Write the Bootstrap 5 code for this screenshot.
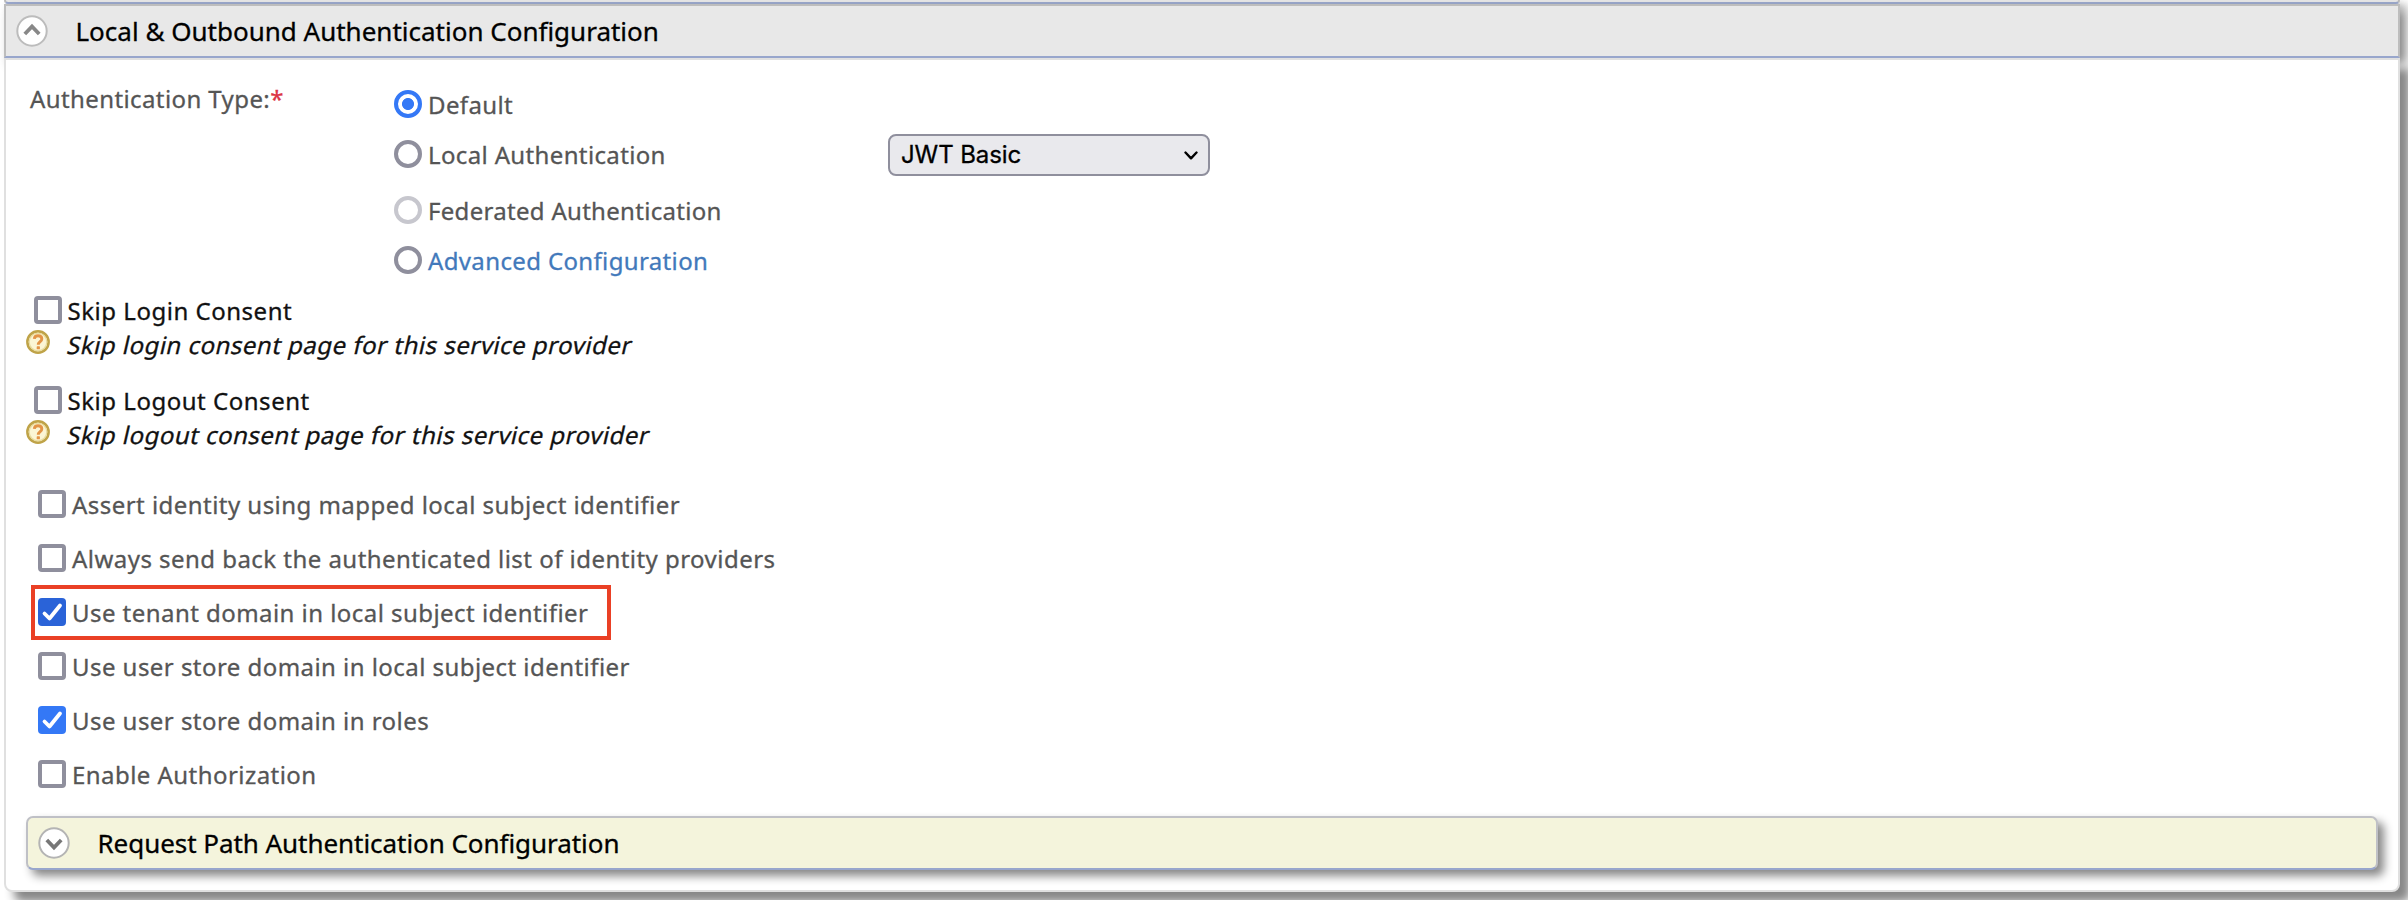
<!DOCTYPE html>
<html lang="en">
<head>
<meta charset="utf-8">
<title>Service Provider Configuration</title>
<link href="https://cdn.jsdelivr.net/npm/bootstrap@5.3.0/dist/css/bootstrap.min.css" rel="stylesheet">
<style>
body{font-family:"Noto Sans","Open Sans",sans-serif;font-size:24px;line-height:32px;color:#555;background:#fff;height:900px;-webkit-text-stroke:.3px}
.prev-panel{height:4px;margin:0 8px 0 4px;background:#e8e8e8;border:2px solid #bbb;border-top:0;border-bottom-color:#98a6cc;border-radius:0 0 5px 5px;box-shadow:6px 6px 10px #888}
.section-bar{height:54px;margin:0 8px 0 4px;padding-left:10px;background:#e8e8e8;border:2px solid #bdbdbd;border-bottom-color:#98a6cc;color:#000;font-size:26px;box-shadow:6px 6px 10px #888;position:relative}
.section-bar svg{margin-right:27.500px}
.section-body{height:834px;margin:0 8px 0 4px;border:2px solid #e0e0e0;border-radius:0 0 8px 8px;background:#fff;box-shadow:10px 10px 10px #888;position:relative}
.sub-bar{height:54px;margin:15px 20px 0 20px;padding-left:10px;background:#f4f4dc;border:2px solid #bfc0c6;border-bottom-color:#98a6cc;border-radius:7px;color:#000;font-size:26px;letter-spacing:-.05px;box-shadow:6px 6px 10px #888}
.sub-bar svg{margin-right:27.500px}
.form-check-input,.form-check-input:focus{flex:none;width:28px;height:28px;margin:0;border:4px solid #8f8f9d;background-color:#fff;box-shadow:none}
.form-check-input[type=checkbox]{border-radius:4px}
.form-check-input[type=checkbox]:checked{border:0;background-color:#3478f6;background-size:28px 28px;background-image:url("data:image/svg+xml,%3Csvg xmlns='http://www.w3.org/2000/svg' viewBox='0 0 28 28'%3E%3Cpath d='M6.5 15.5l5 5L22 7.5' fill='none' stroke='%23fff' stroke-width='3.8' stroke-linecap='round' stroke-linejoin='round'/%3E%3C/svg%3E")}
.form-check-input.hovered[type=checkbox]:checked{background-color:#2a63d8}
.form-check-input[type=radio]:checked{border-color:#3478f6;background-color:#fff;background-image:radial-gradient(circle,#3478f6 5.6px,transparent 6.4px);background-origin:border-box}
.form-check-input:disabled{opacity:1;border-color:#c7c7ce}
.form-check-input:disabled~label{opacity:1}
label,.field-name{padding-top:1.4px;white-space:nowrap;letter-spacing:.45px}
.auth-row{height:234px}
.field-name{width:364px;padding-left:24px;padding-top:22.5px;letter-spacing:.4px}
.radios{padding-top:19px}
.radios label{padding-left:6px;letter-spacing:.36px}
.radio-row{height:50px}
.radio-row.taller{height:56px;padding-top:6px}
.radio-row.taller label{letter-spacing:.3px}
.method-name{width:494px}
.method-select{width:322px;height:42px;margin-top:2px;padding:0 11px;border:2px solid #8f8f9d;border-radius:8px;background:#e9e9ed;color:#000;font:24px/38px Inter,sans-serif;letter-spacing:-.1px;appearance:none;background-image:url("data:image/svg+xml,%3Csvg xmlns='http://www.w3.org/2000/svg' viewBox='0 0 14 9'%3E%3Cpath d='M1.5 1.5L7 7.3l5.500-5.800' fill='none' stroke='%23000' stroke-width='2.400' stroke-linecap='round' stroke-linejoin='round'/%3E%3C/svg%3E");background-repeat:no-repeat;background-position:right 10px center;background-size:14px 9px}
a{color:#4279bb;text-decoration:none}
.consent{height:90px;color:#111}
.consent label{padding-left:5.500px;letter-spacing:.52px}
.consent .top-line{height:32px;padding-left:28px}
.consent .help-line{height:36px;padding-left:20px}
.consent .help-line svg{margin-top:-4px}
.slanted{display:inline-block;transform:skewX(-13deg);transform-origin:0 26px;margin-left:16px;padding-top:2px;letter-spacing:.5px;white-space:nowrap}
.options{padding-top:3px}
.option-row{height:54px;padding-left:32px}
.option-row label{padding-left:6px}
.option-row label.wide-text{letter-spacing:.46px}
.highlight{position:absolute;left:25px;top:111px;width:580px;height:55px;border:4px solid #ea4025;pointer-events:none}
</style>
</head>
<body class="overflow-hidden">
<svg class="d-none">
  <symbol id="help" viewBox="0 0 24 24">
    <circle cx="12" cy="12" r="10.600" fill="#fbf5d5" stroke="#bfa348" stroke-width="2.600"/>
    <circle cx="12" cy="12" r="8.800" fill="none" stroke="#e9dca0" stroke-width="1.200"/>
    <path d="M8.300 8.900C8.500 6.700 10 5.800 12 5.800c2.300 0 3.800 1.200 3.800 3.100 0 2.700-3.500 2.800-3.500 5.800" fill="none" stroke="#e39447" stroke-width="2.900"/>
    <rect x="10.700" y="16.300" width="3.200" height="3" rx=".6" fill="#e39447"/>
  </symbol>
</svg>

<div class="prev-panel"></div>
<div class="section-bar d-flex align-items-center">
  <svg width="32" height="32" viewBox="0 0 32 32"><circle cx="16" cy="16" r="14.700" fill="#fff" stroke="#bcbcbc" stroke-width="2"/><path d="M8.800 19L16 11.500l7.200 7.500" fill="none" stroke="#888" stroke-width="3.800"/></svg>
  <span>Local &amp; Outbound Authentication Configuration</span>
</div>

<div class="section-body">
  <div class="auth-row d-flex">
    <div class="field-name">Authentication Type:<span class="text-danger">*</span></div>
    <div class="radios ms-4">
      <div class="radio-row d-flex align-items-center">
        <input class="form-check-input" type="radio" name="auth" id="r1" checked><label for="r1">Default</label>
      </div>
      <div class="radio-row d-flex align-items-center">
        <div class="method-name d-flex align-items-center">
          <input class="form-check-input" type="radio" name="auth" id="r2"><label for="r2">Local Authentication</label>
        </div>
        <select class="method-select"><option>JWT Basic</option></select>
      </div>
      <div class="radio-row taller d-flex align-items-center">
        <input class="form-check-input" type="radio" name="auth" id="r3" disabled><label for="r3">Federated Authentication</label>
      </div>
      <div class="radio-row d-flex align-items-center">
        <input class="form-check-input" type="radio" name="auth" id="r4"><label for="r4"><a href="#">Advanced Configuration</a></label>
      </div>
    </div>
  </div>

  <div class="consents">
    <div class="consent">
      <div class="top-line d-flex align-items-center"><input class="form-check-input" type="checkbox" id="c1"><label for="c1">Skip Login Consent</label></div>
      <div class="help-line d-flex align-items-center"><svg width="24" height="24"><use href="#help"/></svg><span class="slanted">Skip login consent page for this service provider</span></div>
    </div>
    <div class="consent">
      <div class="top-line d-flex align-items-center"><input class="form-check-input" type="checkbox" id="c2"><label for="c2">Skip Logout Consent</label></div>
      <div class="help-line d-flex align-items-center"><svg width="24" height="24"><use href="#help"/></svg><span class="slanted">Skip logout consent page for this service provider</span></div>
    </div>
  </div>

  <div class="options position-relative">
    <div class="option-row d-flex align-items-center"><input class="form-check-input" type="checkbox" id="o1"><label class="wide-text" for="o1">Assert identity using mapped local subject identifier</label></div>
    <div class="option-row d-flex align-items-center"><input class="form-check-input" type="checkbox" id="o2"><label class="wide-text" for="o2">Always send back the authenticated list of identity providers</label></div>
    <div class="option-row d-flex align-items-center"><input class="form-check-input hovered" type="checkbox" id="o3" checked><label for="o3">Use tenant domain in local subject identifier</label></div>
    <div class="option-row d-flex align-items-center"><input class="form-check-input" type="checkbox" id="o4"><label for="o4">Use user store domain in local subject identifier</label></div>
    <div class="option-row d-flex align-items-center"><input class="form-check-input" type="checkbox" id="o5" checked><label for="o5">Use user store domain in roles</label></div>
    <div class="option-row d-flex align-items-center"><input class="form-check-input" type="checkbox" id="o6"><label for="o6">Enable Authorization</label></div>
    <div class="highlight"></div>
  </div>

  <div class="sub-bar d-flex align-items-center">
    <svg width="32" height="32" viewBox="0 0 32 32"><circle cx="16" cy="16" r="14.700" fill="#fff" stroke="#b4b4b4" stroke-width="2"/><path d="M8.800 13L16 20.500l7.200-7.500" fill="none" stroke="#777" stroke-width="3.800"/></svg>
    <span>Request Path Authentication Configuration</span>
  </div>
</div>
<script src="https://cdn.jsdelivr.net/npm/bootstrap@5.3.0/dist/js/bootstrap.bundle.min.js"></script>
</body>
</html>
